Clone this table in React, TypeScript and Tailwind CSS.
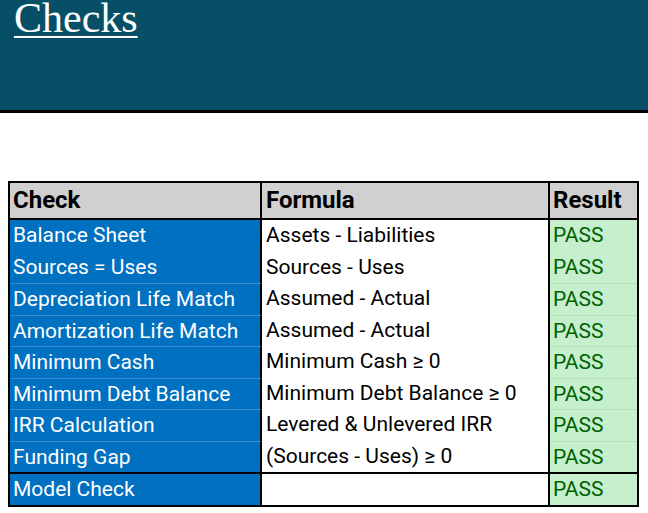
import React from "react";

const rows: [string, string][] = [
  ["Balance Sheet", "Assets - Liabilities"],
  ["Sources = Uses", "Sources - Uses"],
  ["Depreciation Life Match", "Assumed - Actual"],
  ["Amortization Life Match", "Assumed - Actual"],
  ["Minimum Cash", "Minimum Cash ≥ 0"],
  ["Minimum Debt Balance", "Minimum Debt Balance ≥ 0"],
  ["IRR Calculation", "Levered & Unlevered IRR"],
  ["Funding Gap", "(Sources - Uses) ≥ 0"],
];

export default function App() {
  return (
    <div className="w-[648px] h-[513px] bg-white overflow-hidden" style={{ fontFamily: "Roboto, 'Liberation Sans', sans-serif" }}>
      <div className="h-[113px] bg-[#064f67] border-b-[3px] border-black pl-[14px] pt-[1px]">
        <span
          className="text-white underline text-[42px] leading-[34px] decoration-[2px] underline-offset-[4px]"
          style={{ fontFamily: "'Liberation Serif', 'Times New Roman', serif" }}
        >
          Checks
        </span>
      </div>
      <div className="ml-[8px] mt-[68px] w-[631px] border-2 border-black text-[21px]">
        <div className="flex h-[37px] bg-[#d0d0d0] border-b-2 border-black font-bold text-black text-[24px] leading-[35px]">
          <div className="w-[252px] pl-[3px] border-r-2 border-black">Check</div>
          <div className="w-[288px] pl-[4px] border-r-2 border-black">Formula</div>
          <div className="w-[87px] pl-[3px]">Result</div>
        </div>
        {rows.map(([c, f], i) => (
          <div key={c} className="flex h-[31.5px] leading-[30px]">
            <div className={`w-[252px] pl-[3px] bg-[#0070c0] text-white border-r-2 border-r-black ${i > 1 ? "border-t border-t-[#3a88cc]" : ""}`}>{c}</div>
            <div className="w-[288px] pl-[4px] bg-white text-black border-r-2 border-black">{f}</div>
            <div className={`w-[87px] pl-[3px] bg-[#c6efce] text-[#006100] ${i > 1 ? "border-t border-t-[#b3dfbc]" : ""}`}>PASS</div>
          </div>
        ))}
        <div className="flex h-[33px] border-t-2 border-black leading-[31px]">
          <div className="w-[252px] pl-[3px] bg-[#0070c0] text-white border-r-2 border-black">Model Check</div>
          <div className="w-[288px] bg-white border-r-2 border-black"></div>
          <div className="w-[87px] pl-[3px] bg-[#c6efce] text-[#006100]">PASS</div>
        </div>
      </div>
    </div>
  );
}
